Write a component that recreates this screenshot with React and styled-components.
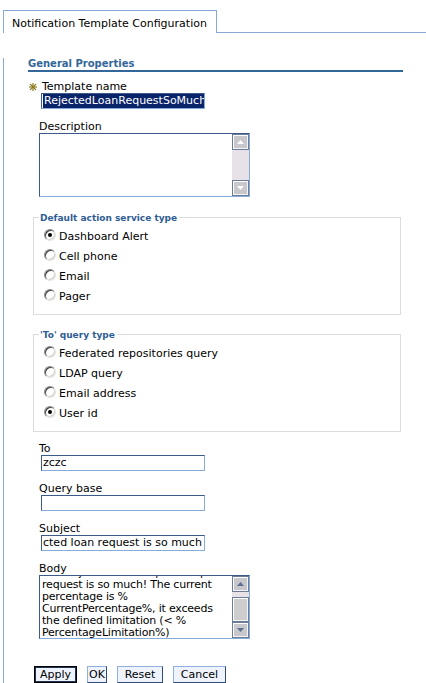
import React from 'react'
import styled, { createGlobalStyle } from 'styled-components'

const GlobalStyle = createGlobalStyle`
  html, body {
    margin: 0;
    padding: 0;
    background: #fff;
  }
  body {
    font-family: 'DejaVu Sans', Verdana, sans-serif;
    font-size: 11px;
    color: #000;
    overflow: hidden;
  }
`

const Page = styled.div`
  width: 426px;
  height: 683px;
  overflow: hidden;
`

const Intro = styled.div`
  height: 3px;
  overflow: hidden;
  padding-left: 14px;
`

const IntroText = styled.div`
  margin-top: -12px;
  line-height: 13px;
  white-space: nowrap;
`

const TabRow = styled.div`
  display: flex;
  margin-top: 7px;
  padding-left: 3px;
`

const Tab = styled.div`
  box-sizing: border-box;
  width: 214px;
  height: 23px;
  border: 1px solid #86a9d8;
  border-bottom: none;
  padding: 6px 0 0 8px;
  line-height: 13px;
  white-space: nowrap;
`

const TabFill = styled.div`
  flex: 1;
  box-sizing: border-box;
  height: 23px;
  border-bottom: 1px solid #86a9d8;
`

const Panel = styled.div`
  margin-left: 3px;
  border-left: 1px solid #86a9d8;
  padding: 0 0 20px 24px;
  min-height: 660px;
`

const Heading = styled.div`
  width: 375px;
  margin-top: 25px;
  line-height: 12px;
  font-size: 10px;
  font-weight: bold;
  color: #336699;
  border-bottom: 2px solid #336699;
`

const RequiredRow = styled.div`
  display: flex;
  align-items: center;
  gap: 5px;
  margin-top: 9px;
  padding-left: 1px;
  line-height: 12px;
`

const Group = styled.div`
  margin-top: ${(p) => p.$top ?? 12}px;
  padding-left: 11px;
`

const Label = styled.div`
  line-height: 12px;
`

const Field = styled.div`
  box-sizing: border-box;
  width: 164px;
  height: 16px;
  margin-left: 2px;
  border: 1px solid;
  border-color: #3c5a8a #86acd9 #86acd9 #3c5a8a;
  padding-left: 1px;
  line-height: 14px;
  white-space: nowrap;
  overflow: hidden;
`

const Selected = styled.span`
  display: block;
  background: #0a246a;
  color: #fff;
  padding-left: 1px;
`

const TextArea = styled.div`
  box-sizing: border-box;
  display: flex;
  width: 211px;
  height: 64px;
  border: 1px solid;
  border-color: #3c5a8a #86acd9 #86acd9 #3c5a8a;
`

const TextBody = styled.div`
  flex: 1;
  overflow: hidden;
  padding-left: 2px;
  line-height: 12px;
  letter-spacing: -0.2px;
  white-space: nowrap;
`

const TextScroll = styled.div`
  margin-top: -9px;
`

const Scrollbar = styled.div`
  display: flex;
  flex-direction: column;
  width: 17px;
  background: #e6e2e8;
`

const ScrollButton = styled.div`
  box-sizing: border-box;
  display: flex;
  align-items: center;
  justify-content: center;
  height: ${(p) => p.$h ?? 16}px;
  border: 1px solid #6e7b97;
  box-shadow: inset 1px 1px 0 #fff, inset -1px -1px 0 #f4f4f4;
  background: ${(p) => (p.$thumb ? '#cdcdcd' : '#c8c8cc')};
`

const Track = styled.div`
  flex: ${(p) => (p.$h ? 'none' : 1)};
  height: ${(p) => (p.$h ? `${p.$h}px` : 'auto')};
`

const Fieldset = styled.fieldset`
  box-sizing: border-box;
  width: 368px;
  margin: ${(p) => p.$top}px 0 0 5px;
  padding: 3px 0 7px 0;
  border: 1px solid #dcdcdc;
`

const Legend = styled.legend`
  margin-left: 5px;
  padding: 2px 2px 0 1px;
  line-height: 12px;
  font-size: 9px;
  font-weight: bold;
  color: #2f5d94;
`

const RadioList = styled.div`
  padding-left: 10px;
`

const RadioRow = styled.div`
  display: flex;
  align-items: flex-start;
  height: 20px;
  line-height: 20px;
`

const Radio = styled.span`
  position: relative;
  box-sizing: border-box;
  width: 12px;
  height: 12px;
  margin: 2px 3px 0 0;
  border-radius: 50%;
  border: 1px solid;
  border-color: #8a8a8a #e4e4e4 #e4e4e4 #8a8a8a;
  box-shadow: inset 1px 1px 0 #404040, inset -1px -1px 0 #d4d0c8;
  background: #fff;

  &::after {
    content: '';
    display: ${(p) => (p.$checked ? 'block' : 'none')};
    position: absolute;
    left: 3px;
    top: 3px;
    width: 4px;
    height: 4px;
    border-radius: 50%;
    background: #000;
  }
`

const ButtonRow = styled.div`
  display: flex;
  gap: 10px;
  margin-top: 27px;
  padding-left: 6px;
`

const Button = styled.button`
  box-sizing: border-box;
  width: ${(p) => p.$w}px;
  height: 17px;
  padding: 0;
  font-family: 'DejaVu Sans', Verdana, sans-serif;
  font-size: 11px;
  line-height: 13px;
  color: #000;
  background: #eef3fd;
  border: 1px solid;
  border-color: ${(p) =>
    p.$primary ? '#000' : '#8fb0dc #2d4c7c #2d4c7c #8fb0dc'};
  box-shadow: ${(p) => (p.$primary ? 'inset 0 0 0 1px #1f3358' : 'none')};
`

const Star = () => (
  <svg width="8" height="8" viewBox="0 0 8 8">
    <g stroke="#8a7a1c" strokeWidth="1.2" strokeLinecap="square">
      <line x1="4" y1="0.5" x2="4" y2="7.5" />
      <line x1="0.5" y1="4" x2="7.5" y2="4" />
      <line x1="1.5" y1="1.5" x2="6.5" y2="6.5" />
      <line x1="6.5" y1="1.5" x2="1.5" y2="6.5" />
    </g>
  </svg>
)

const Arrow = ({ up, color }) => (
  <svg width="7" height="4" viewBox="0 0 7 4">
    <polygon
      points={up ? '3.5,0 7,4 0,4' : '0,0 7,0 3.5,4'}
      fill={color}
    />
  </svg>
)

const Bar = ({ disabled, thumb }) => {
  const color = disabled ? '#ffffff' : '#5d6e90'
  return (
    <Scrollbar>
      <ScrollButton>
        <Arrow up color={color} />
      </ScrollButton>
      {thumb ? (
        <>
          <Track $h={5} />
          <ScrollButton $thumb $h={25} />
          <Track />
        </>
      ) : (
        <Track />
      )}
      <ScrollButton>
        <Arrow color={color} />
      </ScrollButton>
    </Scrollbar>
  )
}

const RadioGroup = ({ legend, options, checked, top }) => (
  <Fieldset $top={top}>
    <Legend>{legend}</Legend>
    <RadioList>
      {options.map((o) => (
        <RadioRow key={o}>
          <Radio $checked={o === checked} />
          {o}
        </RadioRow>
      ))}
    </RadioList>
  </Fieldset>
)

const bodyLines = [
  'Your rejected loan request is quite big, apply',
  'request is so much! The current',
  'percentage is %',
  'CurrentPercentage%, it exceeds',
  'the defined limitation (< %',
  'PercentageLimitation%)',
]

export default function App() {
  return (
    <Page>
      <GlobalStyle />
      <Intro>
        <IntroText>
          Specify the properties of this policy, template and its gauge query type to apply.
        </IntroText>
      </Intro>
      <TabRow>
        <Tab>Notification Template Configuration</Tab>
        <TabFill />
      </TabRow>
      <Panel>
        <Heading>General Properties</Heading>

        <RequiredRow>
          <Star />
          <span>Template name</span>
        </RequiredRow>
        <Group $top={0}>
          <Field>
            <Selected>RejectedLoanRequestSoMuch</Selected>
          </Field>
        </Group>

        <Group>
          <Label>Description</Label>
          <TextArea>
            <TextBody />
            <Bar disabled />
          </TextArea>
        </Group>

        <RadioGroup
          top={13}
          legend="Default action service type"
          options={['Dashboard Alert', 'Cell phone', 'Email', 'Pager']}
          checked="Dashboard Alert"
        />
        <RadioGroup
          top={12}
          legend="'To' query type"
          options={[
            'Federated repositories query',
            'LDAP query',
            'Email address',
            'User id',
          ]}
          checked="User id"
        />

        <Group $top={11}>
          <Label>To</Label>
          <Field>zczc</Field>
        </Group>
        <Group>
          <Label>Query base</Label>
          <Field />
        </Group>
        <Group>
          <Label>Subject</Label>
          <Field>cted loan request is so much</Field>
        </Group>
        <Group>
          <Label>Body</Label>
          <TextArea>
            <TextBody>
              <TextScroll>
                {bodyLines.map((l) => (
                  <div key={l}>{l}</div>
                ))}
              </TextScroll>
            </TextBody>
            <Bar thumb />
          </TextArea>
        </Group>

        <ButtonRow>
          <Button $primary $w={43}>Apply</Button>
          <Button $w={20}>OK</Button>
          <Button $w={46}>Reset</Button>
          <Button $w={53}>Cancel</Button>
        </ButtonRow>
      </Panel>
    </Page>
  )
}
